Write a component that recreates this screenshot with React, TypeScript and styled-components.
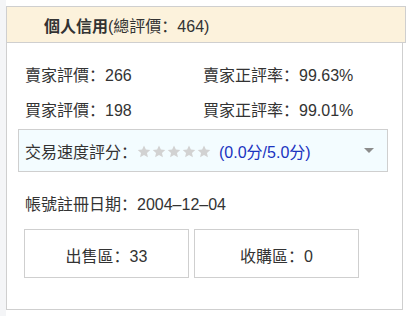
import React from 'react';
import styled, { createGlobalStyle } from 'styled-components';

const GlobalStyle = createGlobalStyle`
  html, body {
    margin: 0;
    padding: 0;
    background: #ffffff;
  }
  body {
    font-family: "Liberation Sans", "Noto Sans CJK SC", sans-serif;
    color: #333333;
  }
`;

const Page = styled.div`
  display: flex;
  height: 316px;
  overflow: hidden;
`;

const SideStrip = styled.div`
  width: 6px;
  flex: none;
  background: #f4f5f7;
`;

const Main = styled.div`
  padding-top: 6px;
  display: flex;
  flex-direction: column;
`;

const Header = styled.div`
  box-sizing: border-box;
  width: 400px;
  height: 37px;
  border: 1px solid #cfcfcf;
  background: #fcf2dc;
  display: flex;
  align-items: center;
  padding-left: 37px;
  padding-top: 1px;
  font-size: 16px;
  color: #333;
  white-space: nowrap;
`;

const HeaderStrong = styled.strong`
  font-weight: 700;
`;

const Card = styled.div`
  box-sizing: border-box;
  width: 397px;
  border: 1px solid #cfcfcf;
  border-top: none;
  padding: 15px 14px 31px 11px;
  display: flex;
  flex-direction: column;
`;

const StatsGrid = styled.div`
  display: grid;
  grid-template-columns: 178px 1fr;
  padding-left: 7px;
`;

const Stat = styled.div`
  font-size: 16px;
  line-height: 35px;
  white-space: nowrap;
`;

const SpeedBox = styled.div`
  box-sizing: border-box;
  height: 43px;
  margin-top: 1px;
  border: 1px solid #cfcfcf;
  background: #f3fcff;
  display: flex;
  align-items: center;
  padding: 0 13px 0 6px;
  font-size: 16px;
`;

const SpeedLabel = styled.span`
  white-space: nowrap;
`;

const Stars = styled.span`
  display: inline-flex;
  gap: 1px;
  margin-left: 0;
  margin-top: 2px;
`;

const Score = styled.span`
  color: #1a33bf;
  margin-left: 8px;
  white-space: nowrap;
`;

const Caret = styled.span`
  margin-left: auto;
  width: 0;
  height: 0;
  border-left: 5px solid transparent;
  border-right: 5px solid transparent;
  border-top: 5px solid #8c8c8c;
`;

const DateRow = styled.div`
  font-size: 16px;
  line-height: 35px;
  margin-top: 15px;
  padding-left: 7px;
`;

const ButtonRow = styled.div`
  display: flex;
  gap: 5px;
  margin-top: 7px;
  padding-left: 6px;
`;

const AreaButton = styled.div`
  box-sizing: border-box;
  width: 165px;
  height: 49px;
  border: 1px solid #cfcfcf;
  background: #fff;
  display: flex;
  align-items: center;
  justify-content: center;
  font-size: 16px;
  padding-top: 3px;
`;

const Star = () => (
  <svg width="14" height="13" viewBox="0 0 24 23">
    <path
      d="M12 0.8l3.3 7.1 7.8.9-5.8 5.3 1.6 7.7L12 17.9l-6.9 3.9 1.6-7.7L.9 8.8l7.8-.9z"
      fill="#d2d2d2"
    />
  </svg>
);

export default function App() {
  return (
    <>
      <GlobalStyle />
      <Page>
        <SideStrip />
        <Main>
          <Header>
            <HeaderStrong>個人信用</HeaderStrong>(總評價：464)
          </Header>
          <Card>
            <StatsGrid>
              <Stat>賣家評價：266</Stat>
              <Stat>賣家正評率：99.63%</Stat>
              <Stat>買家評價：198</Stat>
              <Stat>買家正評率：99.01%</Stat>
            </StatsGrid>
            <SpeedBox>
              <SpeedLabel>交易速度評分：</SpeedLabel>
              <Stars>
                {[0, 1, 2, 3, 4].map((i) => (
                  <Star key={i} />
                ))}
              </Stars>
              <Score>(0.0分/5.0分)</Score>
              <Caret />
            </SpeedBox>
            <DateRow>帳號註冊日期：2004–12–04</DateRow>
            <ButtonRow>
              <AreaButton>出售區：33</AreaButton>
              <AreaButton>收購區：0</AreaButton>
            </ButtonRow>
          </Card>
        </Main>
      </Page>
    </>
  );
}
